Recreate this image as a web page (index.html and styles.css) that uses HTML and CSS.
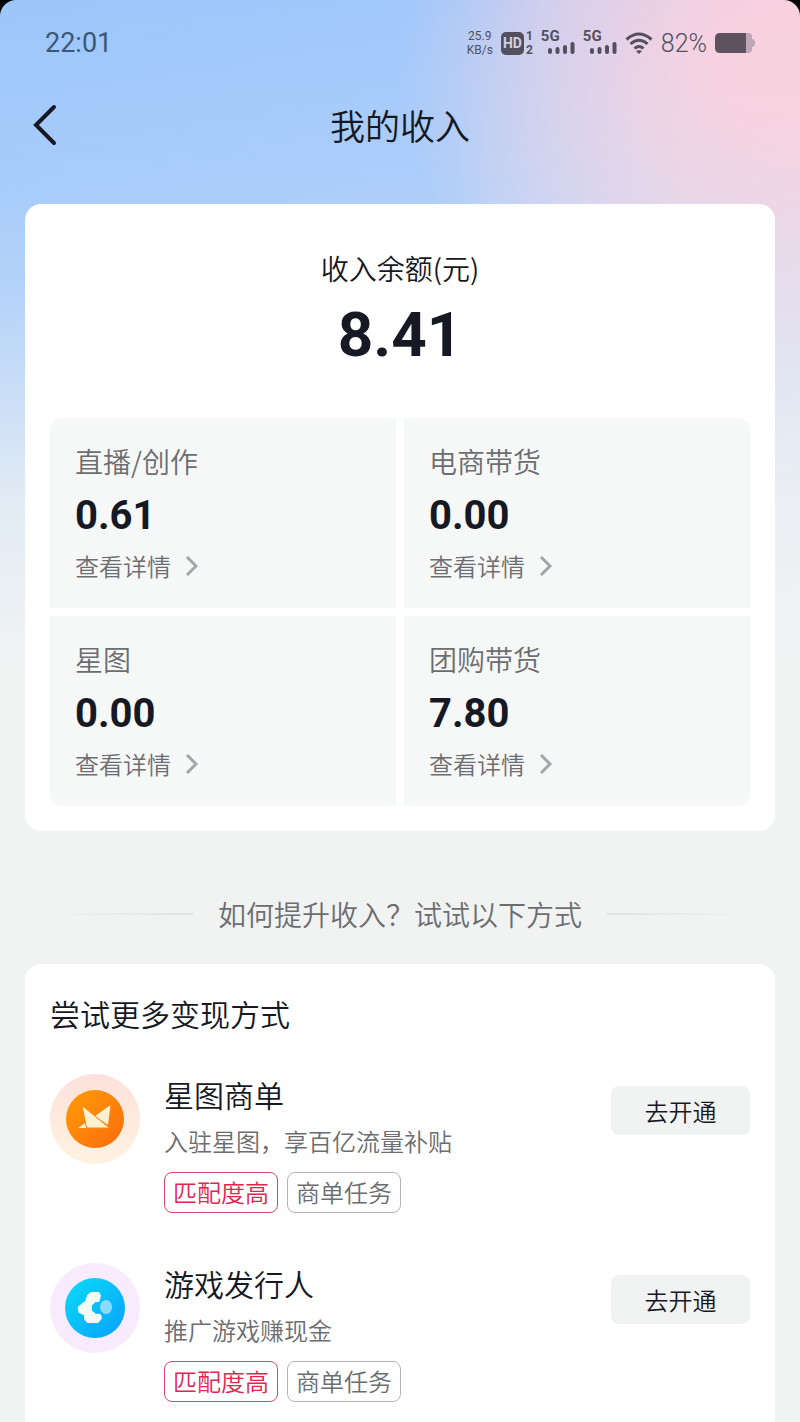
FILE: index.html
```html
<!DOCTYPE html>
<html lang="zh-CN">
<head>
	<meta charset="UTF-8">
	<meta name="viewport" content="width=device-width, initial-scale=1">
	<title>我的收入</title>
	<link rel="stylesheet" href="styles.css">
</head>
<body>
	<div class="screen">
		<div class="statusbar">
			<span class="clock">22:01</span>
			<div class="status">
				<div class="speed"><span>25.9</span><span>KB/s</span></div>
				<div class="hd">
					<span class="hd-box">HD</span>
					<span class="sims"><span>1</span><span>2</span></span>
				</div>
				<div class="signal">
					<span>5G</span>
					<svg width="27" height="13" viewBox="0 0 27 13"><path d="M2 8v2M9.500 7v3M17 5v5M24.500 2v8"/></svg>
				</div>
				<div class="signal">
					<span>5G</span>
					<svg width="27" height="13" viewBox="0 0 27 13"><path d="M2 8v2M9.500 7v3M17 5v5M24.500 2v8"/></svg>
				</div>
				<svg class="wifi" width="28" height="24" viewBox="0 0 28 24">
					<path d="M1.500 8.500Q14-2.500 26.500 8.500M5.500 13Q14 5.500 22.500 13M9.500 17.500Q14 13.500 18.500 17.500"/>
					<path class="dot" d="M11 20q3-1.500 6 0l-3 3z"/>
				</svg>
				<span class="percent">82%</span>
				<svg class="battery" width="40" height="20" viewBox="0 0 40 20">
					<path class="rest" d="M31 0h2q4 0 4 4v2q3 0 3 4t-3 4v2q0 4-4 4h-2z"/>
					<path d="M5 0h26v20H5q-5 0-5-5V5q0-5 5-5z"/>
				</svg>
			</div>
		</div>

		<header class="header">
			<button class="back" type="button" aria-label="返回">
				<svg width="26" height="42" viewBox="0 0 26 42"><path d="M22 3L4 21l18 18"/></svg>
			</button>
			<h1>我的收入</h1>
		</header>

		<main>
			<section class="card income">
				<h2 class="balance-label">收入余额(元)</h2>
				<div class="balance">8.41</div>
				<div class="grid">
					<div class="cell">
						<h3>直播/创作</h3>
						<div class="amount">0.61</div>
						<a href="#live">查看详情<svg width="14" height="22" viewBox="0 0 14 22"><path d="M2 2l9 9-9 9"/></svg></a>
					</div>
					<div class="cell">
						<h3>电商带货</h3>
						<div class="amount">0.00</div>
						<a href="#shop">查看详情<svg width="14" height="22" viewBox="0 0 14 22"><path d="M2 2l9 9-9 9"/></svg></a>
					</div>
					<div class="cell">
						<h3>星图</h3>
						<div class="amount">0.00</div>
						<a href="#star">查看详情<svg width="14" height="22" viewBox="0 0 14 22"><path d="M2 2l9 9-9 9"/></svg></a>
					</div>
					<div class="cell">
						<h3>团购带货</h3>
						<div class="amount">7.80</div>
						<a href="#group">查看详情<svg width="14" height="22" viewBox="0 0 14 22"><path d="M2 2l9 9-9 9"/></svg></a>
					</div>
				</div>
			</section>

			<div class="divider"><span>如何提升收入？试试以下方式</span></div>

			<section class="card more">
				<h2>尝试更多变现方式</h2>
				<div class="item">
					<svg class="logo" width="90" height="90" viewBox="0 0 90 90">
						<defs>
							<linearGradient id="ring1" x1="0" y1="0" x2="0" y2="1"><stop offset="0" stop-color="#fde1dc"/><stop offset="1" stop-color="#fff3e0"/></linearGradient>
							<linearGradient id="star" x1="0" y1="0" x2="1" y2="1"><stop offset="0" stop-color="#ff9d08"/><stop offset="1" stop-color="#fa6b0c"/></linearGradient>
						</defs>
						<circle cx="45" cy="45" r="45" fill="url(#ring1)"/>
						<circle cx="45" cy="45" r="29" fill="url(#star)"/>
						<path d="M45 42L60.500 31L58 51zM28 54L35 49L37 54z" fill="#fff0d2"/>
						<path d="M32 31.500L59.500 54H36.500z" fill="#fff0d2" stroke="#fb8a10"/>
					</svg>
					<div class="info">
						<h3>星图商单</h3>
						<p>入驻星图，享百亿流量补贴</p>
						<div class="tags"><span class="tag hot">匹配度高</span><span class="tag">商单任务</span></div>
					</div>
					<button class="open" type="button">去开通</button>
				</div>
				<div class="item">
					<svg class="logo" width="90" height="90" viewBox="0 0 90 90">
						<defs>
							<linearGradient id="game" x1="0" y1="0" x2="1" y2="1"><stop offset="0" stop-color="#0bdcf8"/><stop offset="1" stop-color="#08a0fa"/></linearGradient>
						</defs>
						<circle cx="45" cy="45" r="45" fill="#f8ebfd"/>
						<circle cx="45" cy="45" r="30" fill="url(#game)"/>
						<ellipse cx="56" cy="44" rx="6" ry="7" fill="#8bdcfb"/>
						<path d="M41 30H48.500L50 33L48.500 38H45L41 42V48L45 51.500L50 52L51 55L48 59H38L35 56V51.500L29.500 49L28.700 44.500L36.500 38L38 32.500z" fill="#f0fcf5" stroke="#f0fcf5" stroke-width="2" stroke-linejoin="round"/>
					</svg>
					<div class="info">
						<h3>游戏发行人</h3>
						<p>推广游戏赚现金</p>
						<div class="tags"><span class="tag hot">匹配度高</span><span class="tag">商单任务</span></div>
					</div>
					<button class="open" type="button">去开通</button>
				</div>
			</section>
		</main>
	</div>
</body>
</html>
```
FILE: styles.css
```css
* {
	box-sizing: border-box;
}
html {
	background: #000;
}
body, h1, h2, h3, p {
	margin: 0;
	font-weight: 350;
}
body {
	font-family: "Noto Sans CJK SC", sans-serif;
	color: #161823;
}
svg {
	display: block;
	fill: none;
}
.screen {
	min-height: 100vh;
	overflow: hidden;
	border-radius: 16px 16px 0 0;
	background:
		linear-gradient(to bottom, rgba(241,243,243,0) 0, rgba(241,243,243,0.150) 200px, rgba(241,243,243,0.300) 300px, rgba(241,243,243,0.550) 400px, rgba(241,243,243,0.820) 500px, #f1f3f3 670px),
		radial-gradient(ellipse 400px 360px at 100% 60px, #fad0de 0, #f8d0df 20%, rgba(236,208,228,0.700) 55%, rgba(215,210,240,0) 100%),
		linear-gradient(95deg, #9cc6fb 0%, #a2c8fb 50%, #c8d6f6 75%, #d8def4 100%);
}
.statusbar {
	height: 86px;
	padding: 0 45px;
	display: flex;
	align-items: center;
	justify-content: space-between;
	font-family: Roboto, sans-serif;
	font-weight: 400;
	color: #52505f;
}
.clock {
	font-size: 27px;
	color: #3c5878;
}
.status {
	display: flex;
	align-items: center;
	gap: 8px;
}
.speed {
	display: flex;
	flex-direction: column;
	align-items: center;
	font-size: 12px;
	line-height: 14px;
}
.hd {
	display: flex;
	align-items: center;
	gap: 2px;
}
.hd-box {
	width: 23px;
	height: 23px;
	border-radius: 5px;
	background: #52505f;
	color: #d0d0e8;
	font-size: 14px;
	font-weight: 700;
	line-height: 23px;
	text-align: center;
}
.sims {
	display: flex;
	flex-direction: column;
	font-size: 12px;
	font-weight: 700;
	line-height: 14px;
}
.signal {
	display: flex;
	flex-direction: column;
	width: 34px;
	font-size: 15px;
	font-weight: 700;
	line-height: 11px;
}
.signal svg {
	align-self: flex-end;
	stroke: #52505f;
	stroke-width: 4;
	stroke-linecap: round;
}
.wifi {
	stroke: #52505f;
	stroke-width: 3;
}
.wifi .dot {
	fill: #52505f;
	stroke: none;
}
.percent {
	font-size: 25px;
	font-weight: 300;
}
.battery {
	fill: #5f525f;
}
.battery .rest {
	fill: #bda6b6;
}
.header {
	height: 78px;
	padding: 0 32px;
	display: grid;
	grid-template-columns: 40px 1fr 40px;
	align-items: center;
}
.header h1 {
	font-size: 35px;
	line-height: 48px;
	text-align: center;
}
.back {
	padding: 0;
	border: 0;
	background: none;
}
.back path {
	stroke: #161823;
	stroke-width: 4;
	stroke-linecap: round;
}
main {
	padding: 40px 25px 0;
}
.card {
	padding: 25px;
	border-radius: 16px;
	background: #fff;
}
.balance-label {
	padding-top: 19px;
	font-size: 28px;
	line-height: 40px;
	text-align: center;
}
.balance {
	margin-bottom: 36px;
	font-family: Roboto, sans-serif;
	font-size: 62px;
	font-weight: 700;
	line-height: 94px;
	text-align: center;
}
.grid {
	display: grid;
	grid-template-columns: 1fr 1fr;
	gap: 8px;
	border-radius: 12px;
	overflow: hidden;
}
.cell {
	height: 190px;
	padding: 23px 25px;
	background: #f6f8f8;
}
.cell h3 {
	font-size: 28px;
	line-height: 40px;
	color: #6c6d70;
}
.amount {
	font-family: Roboto, sans-serif;
	font-size: 40px;
	font-weight: 700;
	line-height: 70px;
}
.cell a {
	display: flex;
	align-items: center;
	gap: 14px;
	font-size: 24px;
	line-height: 30px;
	color: #6c6d70;
	text-decoration: none;
}
.cell a path {
	stroke: #a5a6a8;
	stroke-width: 3;
}
.divider {
	padding: 63px 25px 30px;
	display: flex;
	align-items: center;
	gap: 25px;
	font-size: 28px;
	line-height: 40px;
	color: #6c6d70;
}
.divider::before, .divider::after {
	content: "";
	flex: 1;
	height: 2px;
	background: linear-gradient(to left, #e2e4e4, #f1f3f3);
}
.divider::after {
	background: linear-gradient(to right, #e2e4e4, #f1f3f3);
}
.more h2 {
	margin-bottom: 37px;
	font-size: 30px;
	line-height: 48px;
}
.item {
	display: flex;
	align-items: flex-start;
	margin-bottom: 50px;
}
.logo {
	flex: none;
	margin-right: 24px;
}
.info {
	flex: 1;
}
.info h3 {
	font-size: 30px;
	line-height: 40px;
}
.info p {
	margin: 9px 0 13px;
	font-size: 24px;
	line-height: 36px;
	color: #6c6d70;
}
.tags {
	display: flex;
	gap: 9px;
}
.tag {
	height: 41px;
	padding: 0 8px;
	border: 1px solid #b4b5b8;
	border-radius: 8px;
	font-size: 24px;
	line-height: 38px;
	color: #6c6d70;
}
.tag.hot {
	border-color: #d8486d;
	color: #e0264f;
}
.open {
	width: 139px;
	height: 49px;
	margin-top: 12px;
	padding: 0;
	border: 0;
	border-radius: 8px;
	background: #f1f3f3;
	font-family: inherit;
	font-size: 24px;
	font-weight: 350;
	color: #161823;
}
```
